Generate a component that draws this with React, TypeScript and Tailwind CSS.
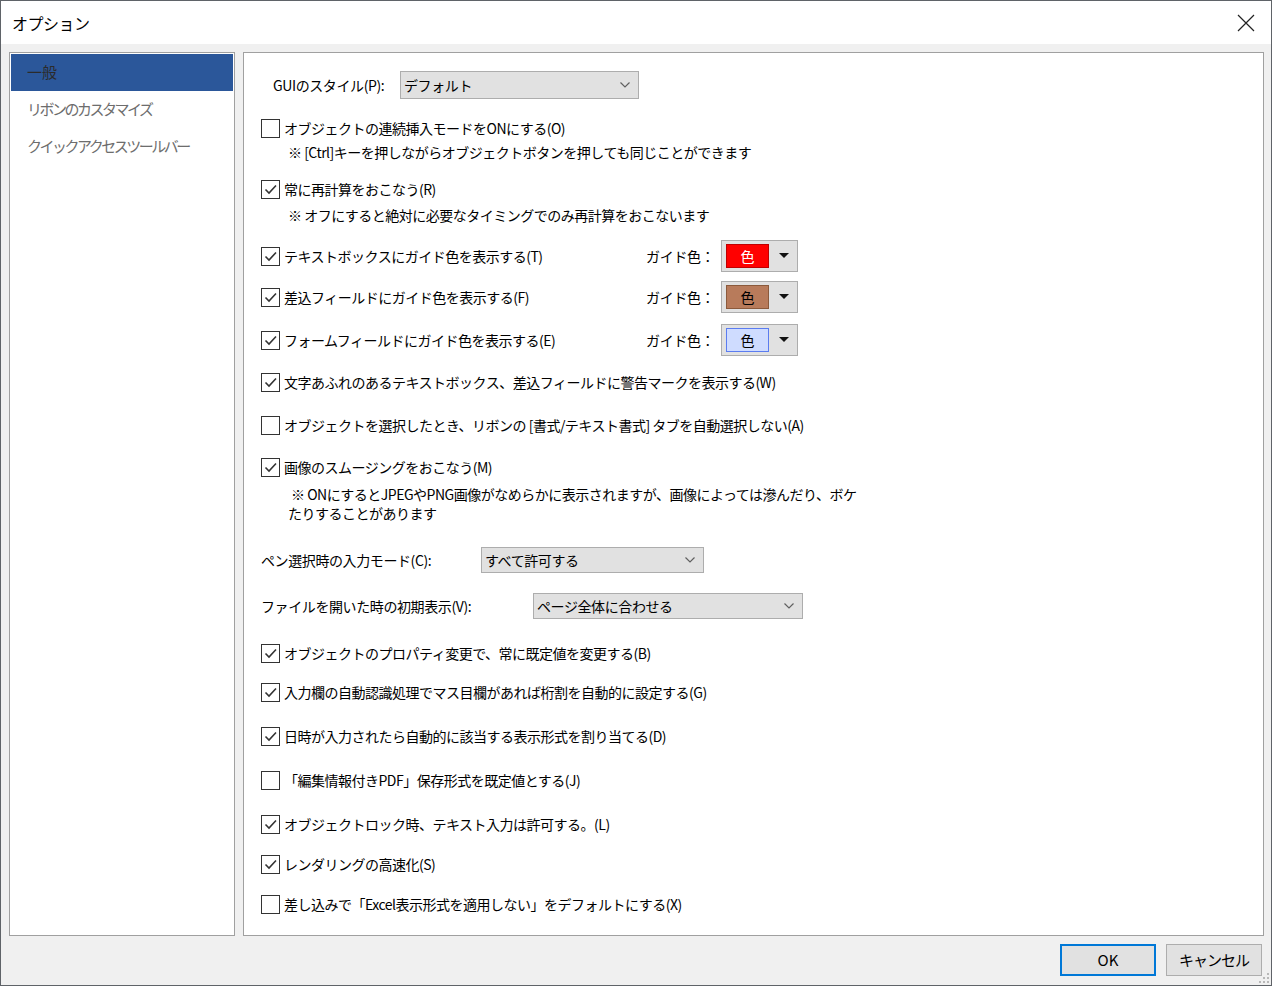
import React from "react";

const font = {
  fontFamily: '"Noto Sans CJK JP", "Noto Sans", sans-serif',
};

function Check({ checked }: { checked?: boolean }) {
  return (
    <span className="w-[19px] h-[19px] border border-[#333333] bg-white flex items-center justify-center shrink-0">
      {checked && (
        <svg width="15" height="15" viewBox="0 0 15 15">
          <path d="M2.5 7.5 L6 11 L13 3.5" fill="none" stroke="#333333" strokeWidth="1.6" />
        </svg>
      )}
    </span>
  );
}

function Chevron() {
  return (
    <svg width="10" height="6" viewBox="0 0 10 6">
      <path d="M0.5 0.5 L5 5 L9.5 0.5" fill="none" stroke="#606060" strokeWidth="1.2" />
    </svg>
  );
}

function Dropdown({ value, className }: { value: string; className: string }) {
  return (
    <div
      className={
        "bg-[#e1e1e1] border border-[#adadad] flex items-center justify-between pl-[3px] pr-[8px] text-[14px] text-black tracking-[-0.4px] " +
        className
      }
    >
      <span>{value}</span>
      <Chevron />
    </div>
  );
}

function Row({
  checked,
  label,
  className,
}: {
  checked?: boolean;
  label: string;
  className: string;
}) {
  return (
    <div className={"flex items-center h-[24px] " + className}>
      <Check checked={checked} />
      <span className="ml-[4px] text-[14px] text-black tracking-[-0.5px] whitespace-nowrap">{label}</span>
    </div>
  );
}

function ColorRow({
  label,
  className,
  swatch,
}: {
  label: string;
  className: string;
  swatch: string;
}) {
  return (
    <div className={"flex items-center h-[32px] " + className}>
      <div className="w-[385px] flex items-center">
        <Check checked />
        <span className="ml-[4px] text-[14px] text-black tracking-[-0.5px] whitespace-nowrap">{label}</span>
      </div>
      <span className="text-[14px] text-black w-[75px] tracking-[-0.3px]">ガイド色：</span>
      <div className="w-[77px] h-[32px] bg-[#e1e1e1] border border-[#adadad] flex items-center pl-[4px]">
        <div
          className={
            "w-[43px] h-[24px] border flex items-center justify-center text-[14px] " + swatch
          }
        >
          色
        </div>
        <svg width="10" height="6" viewBox="0 0 10 6" className="ml-[10px]">
          <path d="M0 0 L10 0 L5 5 Z" fill="#111111" />
        </svg>
      </div>
    </div>
  );
}

export default function App() {
  return (
    <div
      style={font}
      className="w-[1272px] h-[986px] border border-[#5f6368] bg-[#f0f0f0] flex flex-col overflow-hidden"
    >
      <div className="h-[43px] bg-white flex items-center justify-between pl-[11px] pr-[16px] shrink-0">
        <span className="text-[16px] text-black tracking-[-0.5px]">オプション</span>
        <svg width="18" height="18" viewBox="0 0 18 18">
          <path d="M1 1 L17 17 M17 1 L1 17" stroke="#222222" strokeWidth="1.2" />
        </svg>
      </div>

      <div className="flex gap-[8px] pl-[8px] pr-[7px] pt-[8px] h-[892px] shrink-0">
        <div className="w-[226px] border border-[#a0a0a0] bg-white p-[1px] flex flex-col">
          <div className="h-[37px] bg-[#2b579a] flex items-center pl-[16px] text-[15px] text-[#2b2b2b] whitespace-nowrap">
            一般
          </div>
          <div className="h-[37px] flex items-center pl-[16px] text-[15px] tracking-[-2.5px] text-[#6d6d6d] whitespace-nowrap">
            リボンのカスタマイズ
          </div>
          <div className="h-[37px] flex items-center pl-[16px] text-[15px] tracking-[-2.5px] text-[#6d6d6d] whitespace-nowrap">
            クイックアクセスツールバー
          </div>
        </div>

        <div className="flex-1 border border-[#a0a0a0] bg-white flex flex-col pl-[17px]">
          <div className="flex items-center mt-[18px] h-[28px]">
            <span className="ml-[12px] w-[127px] text-[14px] text-black tracking-[-0.4px]">GUIのスタイル(P):</span>
            <Dropdown value="デフォルト" className="w-[239px] h-[28px]" />
          </div>

          <Row label="オブジェクトの連続挿入モードをONにする(O)" className="mt-[17px]" />
          <div className="h-[20px] mt-[2px] pl-[27px] text-[14px] text-black flex items-center tracking-[-0.5px] whitespace-nowrap">
            ※ [Ctrl]キーを押しながらオブジェクトボタンを押しても同じことができます
          </div>

          <Row checked label="常に再計算をおこなう(R)" className="mt-[15px]" />
          <div className="h-[20px] mt-[4px] pl-[27px] text-[14px] text-black flex items-center tracking-[-0.5px] whitespace-nowrap">
            ※ オフにすると絶対に必要なタイミングでのみ再計算をおこないます
          </div>

          <ColorRow
            label="テキストボックスにガイド色を表示する(T)"
            className="mt-[15px]"
            swatch="bg-[#ff0000] border-[#c00000] text-white"
          />
          <ColorRow
            label="差込フィールドにガイド色を表示する(F)"
            className="mt-[9px]"
            swatch="bg-[#b87b5b] border-[#8b5a3c] text-black"
          />
          <ColorRow
            label="フォームフィールドにガイド色を表示する(E)"
            className="mt-[11px]"
            swatch="bg-[#cfdcff] border-[#5b7cf0] text-black"
          />

          <Row
            checked
            label="文字あふれのあるテキストボックス、差込フィールドに警告マークを表示する(W)"
            className="mt-[14px]"
          />
          <Row
            label="オブジェクトを選択したとき、リボンの [書式/テキスト書式] タブを自動選択しない(A)"
            className="mt-[19px]"
          />
          <Row checked label="画像のスムージングをおこなう(M)" className="mt-[18px]" />
          <div className="mt-[6px] pl-[27px] text-[14px] leading-[19px] text-black tracking-[-0.5px] whitespace-nowrap">
            <span className="pl-[3px]">※ ONにするとJPEGやPNG画像がなめらかに表示されますが、画像によっては滲んだり、ボケ</span>
            <br />
            たりすることがあります
          </div>

          <div className="flex items-center mt-[24px] h-[26px]">
            <span className="w-[220px] text-[14px] text-black tracking-[-0.4px]">ペン選択時の入力モード(C):</span>
            <Dropdown value="すべて許可する" className="w-[223px] h-[26px]" />
          </div>
          <div className="flex items-center mt-[20px] h-[26px]">
            <span className="w-[272px] text-[14px] text-black tracking-[-0.4px]">ファイルを開いた時の初期表示(V):</span>
            <Dropdown value="ページ全体に合わせる" className="w-[270px] h-[26px]" />
          </div>

          <Row checked label="オブジェクトのプロパティ変更で、常に既定値を変更する(B)" className="mt-[22px]" />
          <Row
            checked
            label="入力欄の自動認識処理でマス目欄があれば桁割を自動的に設定する(G)"
            className="mt-[15px]"
          />
          <Row
            checked
            label="日時が入力されたら自動的に該当する表示形式を割り当てる(D)"
            className="mt-[20px]"
          />
          <Row label="「編集情報付きPDF」保存形式を既定値とする(J)" className="mt-[20px]" />
          <Row checked label="オブジェクトロック時、テキスト入力は許可する。(L)" className="mt-[20px]" />
          <Row checked label="レンダリングの高速化(S)" className="mt-[16px]" />
          <Row
            label="差し込みで「Excel表示形式を適用しない」をデフォルトにする(X)"
            className="mt-[16px]"
          />
        </div>
      </div>

      <div className="flex-1 flex justify-end items-start pt-[8px] pr-[9px] gap-[10px] relative">
        <button className="w-[96px] h-[32px] bg-[#e1e1e1] border-2 border-[#0078d7] text-[15px] text-black">
          OK
        </button>
        <button className="w-[96px] h-[32px] bg-[#e1e1e1] border border-[#adadad] text-[15px] text-black tracking-[-1px]">
          キャンセル
        </button>
        <svg width="12" height="12" viewBox="0 0 12 12" className="absolute right-[1px] bottom-[1px]">
          <g fill="#b8b8b8">
            <rect x="9" y="1" width="2" height="2" />
            <rect x="5" y="5" width="2" height="2" />
            <rect x="9" y="5" width="2" height="2" />
            <rect x="1" y="9" width="2" height="2" />
            <rect x="5" y="9" width="2" height="2" />
            <rect x="9" y="9" width="2" height="2" />
          </g>
        </svg>
      </div>
    </div>
  );
}
